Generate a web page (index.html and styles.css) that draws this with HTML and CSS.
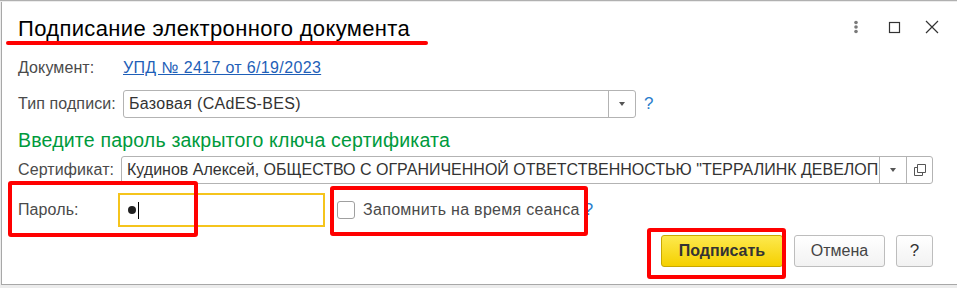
FILE: index.html
```html
<!DOCTYPE html>
<html lang="ru">
<head>
<meta charset="utf-8">
<title>Подписание электронного документа</title>
<link rel="stylesheet" href="styles.css">
</head>
<body>
<div class="dialog">
  <div class="header">
    <div class="title">Подписание электронного документа</div>
    <div class="win-tools">
      <svg class="tool" width="14" height="16" viewBox="0 0 14 16"><circle cx="7" cy="3.5" r="1.8" fill="#7a7a7a"/><circle cx="7" cy="8" r="1.8" fill="#7a7a7a"/><circle cx="7" cy="12.5" r="1.8" fill="#7a7a7a"/></svg>
      <svg class="tool" width="14" height="16" viewBox="0 0 14 16"><rect x="2.5" y="3.5" width="10" height="10" fill="none" stroke="#333" stroke-width="1.2"/></svg>
      <svg class="tool" width="14" height="16" viewBox="0 0 14 16"><path d="M1 2 L13 14 M13 2 L1 14" stroke="#333" stroke-width="1.2" fill="none"/></svg>
    </div>
  </div>

  <div class="row row-doc">
    <span class="label">Документ:</span>
    <a class="link" href="#">УПД № 2417 от 6/19/2023</a>
  </div>

  <div class="row row-type">
    <span class="label">Тип подписи:</span>
    <div class="field field-type">
      <span class="field-text">Базовая (CAdES-BES)</span>
      <span class="field-btn"><span class="arrow"></span></span>
    </div>
    <span class="help">?</span>
  </div>

  <div class="heading">Введите пароль закрытого ключа сертификата</div>

  <div class="row row-cert">
    <span class="label label-cert">Сертификат:</span>
    <div class="field field-cert">
      <span class="field-text">Кудинов Алексей, ОБЩЕСТВО С ОГРАНИЧЕННОЙ ОТВЕТСТВЕННОСТЬЮ "ТЕРРАЛИНК ДЕВЕЛОПМЕНТ"</span>
      <span class="field-btn"><span class="arrow"></span></span>
      <span class="field-btn btn-open">
        <svg width="14" height="14" viewBox="0 0 14 14"><path d="M4.5 1.5 H12.5 V9.5 H4.5 Z" fill="none" stroke="#555" stroke-width="1"/><path d="M4.5 4.5 H1.5 V12.5 H9.5 V9.5" fill="none" stroke="#555" stroke-width="1"/></svg>
      </span>
    </div>
  </div>

  <div class="row row-pass">
    <span class="label label-pass">Пароль:</span>
    <div class="pass-input"><span class="dot"></span><span class="caret"></span></div>
    <div class="remember">
      <span class="checkbox"></span>
      <span class="remember-text">Запомнить на время сеанса</span>
      <span class="help help-small">?</span>
    </div>
  </div>

  <div class="buttons">
    <button class="btn btn-primary">Подписать</button>
    <button class="btn btn-cancel">Отмена</button>
    <button class="btn btn-help">?</button>
  </div>

  <div class="mark mark-title"></div>
  <div class="mark mark-pass"></div>
  <div class="mark mark-remember"></div>
  <div class="mark mark-sign"></div>
</div>
</body>
</html>
```

FILE: styles.css
```css
html, body {
  margin: 0;
  padding: 0;
}
body {
  width: 957px;
  height: 288px;
  background: #ececec;
  font-family: "Liberation Sans", Arial, sans-serif;
  overflow: hidden;
  border-top: 1px solid #b0b0b0;
  box-sizing: border-box;
}
.dialog {
  position: relative;
  margin-left: 1px;
  margin-top: 1px;
  height: 283px;
  background: #fff;
  border-left: 1px solid #a8a8a8;
  border-bottom: 1px solid #a8a8a8;
  box-sizing: border-box;
  padding-left: 16px;
  display: flex;
  flex-direction: column;
}
.header {
  height: 48px;
  display: flex;
  align-items: center;
  justify-content: space-between;
  padding-top: 6px;
  box-sizing: border-box;
}
.title {
  font-size: 22px;
  color: #000;
  letter-spacing: 0.35px;
}
.win-tools {
  display: flex;
  gap: 24px;
  margin-right: 18px;
  padding-bottom: 4px;
}
.tool { display: block; }

.row {
  display: flex;
  align-items: center;
}
.label {
  font-size: 16px;
  color: #4a4a4a;
  width: 105px;
  flex: none;
  letter-spacing: 0.1px;
}
.row-doc { height: 36px; }
.link {
  font-size: 16px;
  color: #1f5fb8;
  text-decoration: underline;
  letter-spacing: 0.35px;
}
.row-type { height: 36px; }
.field {
  display: flex;
  align-items: stretch;
  height: 28px;
  border: 1px solid #b3b3b3;
  border-radius: 3px;
  box-sizing: border-box;
  background: #fff;
}
.field-type { width: 513px; }
.field-text {
  flex: 1;
  font-size: 16px;
  color: #333;
  padding-left: 5px;
  line-height: 26px;
  white-space: nowrap;
  overflow: hidden;
}
.field-type .field-text { letter-spacing: 0.3px; }
.field-btn {
  width: 26px;
  flex: none;
  border-left: 1px solid #b3b3b3;
  display: flex;
  align-items: center;
  justify-content: center;
}
.arrow {
  width: 0;
  height: 0;
  border-left: 3.5px solid transparent;
  border-right: 3.5px solid transparent;
  border-top: 4px solid #555;
}
.help {
  font-size: 17px;
  color: #2a7dcc;
  margin-left: 8px;
}
.heading {
  font-size: 19.5px;
  color: #009a3c;
  height: 20px;
  margin-top: 8px;
  line-height: 20px;
  letter-spacing: 0.2px;
}
.row-cert {
  height: 28px;
  margin-top: 6px;
}
.label-cert { width: 103px; }
.field-cert { width: 812px; }
.btn-open { width: 25px; }
.row-pass {
  height: 34px;
  margin-top: 9px;
}
.label-pass { width: 100px; }
.pass-input {
  width: 207px;
  height: 34px;
  box-sizing: border-box;
  border: 2px solid #f5c41c;
  display: flex;
  align-items: center;
  padding-left: 8px;
}
.dot {
  width: 8px;
  height: 8px;
  background: #222;
  border-radius: 50%;
}
.caret {
  width: 1px;
  height: 17px;
  background: #000;
  margin-left: 2px;
}
.remember {
  display: flex;
  align-items: center;
  margin-left: 12px;
}
.checkbox {
  width: 18px;
  height: 18px;
  border: 1px solid #a0a0a0;
  border-radius: 3px;
  box-sizing: border-box;
}
.remember-text {
  font-size: 16px;
  color: #4a4a4a;
  margin-left: 8px;
  letter-spacing: 0.3px;
}
.help-small { margin-left: 4px; }
.buttons {
  display: flex;
  justify-content: flex-end;
  gap: 11px;
  margin-top: 8px;
  padding-right: 24px;
}
.btn {
  height: 32px;
  border: 1px solid #bdbdbd;
  border-radius: 3px;
  background: linear-gradient(#ffffff, #f2f2f2);
  font-family: "Liberation Sans", Arial, sans-serif;
  font-size: 16px;
  color: #444;
  padding: 0;
  box-sizing: border-box;
}
.btn-primary {
  width: 122px;
  background: linear-gradient(#fde94e, #f5d000);
  border-color: #c9a800;
  color: #333;
  font-weight: bold;
}
.btn-cancel { width: 91px; }
.btn-help { width: 37px; color: #333; font-size: 17px; }

.mark {
  position: absolute;
  border: 4px solid #ff0000;
  border-radius: 3px;
  box-sizing: border-box;
}
.mark-title {
  left: 4px;
  top: 39px;
  width: 422px;
  height: 4px;
  border: 0;
  background: #ff0000;
  border-radius: 2px;
}
.mark-pass {
  left: 6px;
  top: 179px;
  width: 190px;
  height: 56px;
}
.mark-remember {
  left: 328px;
  top: 184px;
  width: 258px;
  height: 50px;
}
.mark-sign {
  left: 645px;
  top: 226px;
  width: 139px;
  height: 51px;
}
```
